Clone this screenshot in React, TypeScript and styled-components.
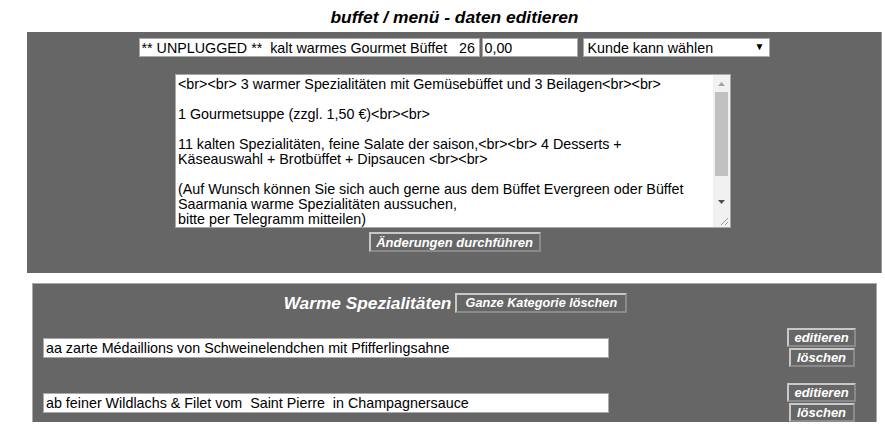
import React from "react";
import styled, { createGlobalStyle } from "styled-components";

const Global = createGlobalStyle`
  html, body { margin: 0; padding: 0; background: #fff; }
  body { font-family: "Liberation Sans", Arial, sans-serif; }
`;

const Page = styled.div`
  width: 885px;
  display: flex;
  flex-direction: column;
`;

const Title = styled.h1`
  margin: 0;
  height: 32px;
  padding: 3px 0 0 24px;
  box-sizing: border-box;
  display: flex;
  align-items: center;
  justify-content: center;
  font: italic bold 17.4px "Liberation Sans", Arial, sans-serif;
  color: #000;
`;

const EditPanel = styled.div`
  margin-left: 27px;
  width: 854px;
  background: #666;
  border-right: 1px solid #999;
  padding: 6px 0 21px;
  display: flex;
  flex-direction: column;
  align-items: center;
`;

const TopRow = styled.div`
  display: flex;
  align-items: center;
  height: 19px;
`;

const TextInput = styled.input<{ $w: number; $ml?: number }>`
  box-sizing: border-box;
  width: ${(p) => p.$w}px;
  height: 19px;
  margin-left: ${(p) => p.$ml ?? 0}px;
  padding: 0 2px;
  border: 1px solid #a9a9a9;
  background: #fff;
  font: 14.3px "Liberation Sans", Arial, sans-serif;
  color: #000;
  outline: none;
`;

const SelectWrap = styled.div`
  position: relative;
  margin-left: 5px;
  width: 187px;
  height: 19px;
`;

const Select = styled.select`
  appearance: none;
  box-sizing: border-box;
  width: 100%;
  height: 19px;
  padding: 0 4px;
  border: 1px solid #a9a9a9;
  border-radius: 0;
  background: #fff;
  font: 14.3px "Liberation Sans", Arial, sans-serif;
  color: #000;
  outline: none;
`;

const Arrow = styled.span`
  position: absolute;
  right: 5px;
  top: 3px;
  font-size: 10px;
  line-height: 12px;
  color: #000;
  pointer-events: none;
`;

const AreaWrap = styled.div`
  position: relative;
  margin-top: 17px;
  margin-left: -2px;
  width: 556px;
  height: 154px;
`;

const Description = styled.textarea`
  display: block;
  box-sizing: border-box;
  width: 100%;
  height: 100%;
  padding: 2px 30px 2px 2px;
  border: 1px solid #a9a9a9;
  background: #fff;
  font: 14.3px/15px "Liberation Sans", Arial, sans-serif;
  color: #000;
  resize: none;
  overflow: hidden;
  outline: none;
`;

const ScrollBar = styled.div`
  position: absolute;
  top: 1px;
  right: 1px;
  bottom: 1px;
  width: 17px;
  background: #f1f1f1;
  display: flex;
  flex-direction: column;
  pointer-events: none;
`;

const ScrollButton = styled.div`
  height: 17px;
  flex: none;
  display: flex;
  align-items: center;
  justify-content: center;
`;

const Track = styled.div`
  flex: 1;
  padding: 0 2px;
`;

const Thumb = styled.div`
  height: 84px;
  background: #c1c1c1;
`;

const GrayButton = styled.button<{ $size?: number }>`
  box-sizing: border-box;
  background: #666;
  color: #fff;
  border: 2px solid;
  border-color: #c8c8c8 #8a8a8a #8a8a8a #c8c8c8;
  font: italic bold ${(p) => p.$size ?? 13}px "Liberation Sans", Arial, sans-serif;
  padding: 0 5px;
  height: 20px;
  cursor: pointer;
  white-space: nowrap;
`;

const SubmitButton = styled(GrayButton)`
  margin-top: 4px;
  width: 172px;
  margin-left: 1px;
`;

const CategoryPanel = styled.div`
  margin-top: 10px;
  margin-left: 32px;
  width: 845px;
  box-sizing: border-box;
  background: #666;
  border: 1px solid #aaa;
  border-bottom: none;
  padding: 9px 0 0;
  display: flex;
  flex-direction: column;
`;

const CategoryHead = styled.div`
  display: flex;
  align-items: center;
  justify-content: center;
  gap: 4px;
  padding-left: 2px;
  height: 20px;
`;

const CategoryTitle = styled.span`
  font: italic bold 17.3px "Liberation Sans", Arial, sans-serif;
  color: #fff;
`;

const KategorieButton = styled(GrayButton)`
  width: 172px;
`;

const ItemList = styled.div`
  display: flex;
  flex-direction: column;
  gap: 16px;
  margin-top: 15px;
  padding: 0 20px 0 10px;
`;

const ItemRow = styled.div`
  display: flex;
  align-items: center;
  justify-content: space-between;
  height: 39px;
`;

const ItemInput = styled(TextInput)`
  height: 20px;
`;

const ButtonStack = styled.div`
  display: flex;
  flex-direction: column;
  align-items: center;
  width: 69px;
`;

const SmallButton = styled(GrayButton)<{ $w: number }>`
  width: ${(p) => p.$w}px;
  height: 19px;
  padding: 0;
  margin-top: ${(p) => (p.$w < 69 ? 1 : 0)}px;
`;

const description = `<br><br> 3 warmer Spezialitäten mit Gemüsebüffet und 3 Beilagen<br><br>

1 Gourmetsuppe (zzgl. 1,50 €)<br><br>

11 kalten Spezialitäten, feine Salate der saison,<br><br> 4 Desserts + Käseauswahl + Brotbüffet + Dipsaucen <br><br>

(Auf Wunsch können Sie sich auch gerne aus dem Büffet Evergreen oder Büffet Saarmania warme Spezialitäten aussuchen,
bitte per Telegramm mitteilen)
<br><br>`;

const items = [
  "aa zarte Médaillions von Schweinelendchen mit Pfifferlingsahne",
  "ab feiner Wildlachs & Filet vom  Saint Pierre  in Champagnersauce",
];

export default function App() {
  return (
    <Page>
      <Global />
      <Title>buffet / menü - daten editieren</Title>
      <EditPanel>
        <TopRow>
          <TextInput $w={341} defaultValue="** UNPLUGGED **  kalt warmes Gourmet Büffet   26" />
          <TextInput $w={96} $ml={2} defaultValue="0,00" />
          <SelectWrap>
            <Select defaultValue="k">
              <option value="k">Kunde kann wählen</option>
            </Select>
            <Arrow>▼</Arrow>
          </SelectWrap>
        </TopRow>
        <AreaWrap>
          <Description defaultValue={description} />
          <ScrollBar>
            <ScrollButton>
              <svg width="7" height="4" viewBox="0 0 7 4">
                <path d="M0 4 L3.5 0 L7 4 Z" fill="#a3a3a3" />
              </svg>
            </ScrollButton>
            <Track>
              <Thumb />
            </Track>
            <ScrollButton>
              <svg width="7" height="4" viewBox="0 0 7 4">
                <path d="M0 0 L3.5 4 L7 0 Z" fill="#505050" />
              </svg>
            </ScrollButton>
            <ScrollButton>
              <svg width="17" height="17" viewBox="0 0 17 17">
                <path d="M15 8 L8 15 M15 12 L12 15" stroke="#9a9a9a" strokeWidth="1" />
              </svg>
            </ScrollButton>
          </ScrollBar>
        </AreaWrap>
        <SubmitButton>Änderungen durchführen</SubmitButton>
      </EditPanel>
      <CategoryPanel>
        <CategoryHead>
          <CategoryTitle>Warme Spezialitäten</CategoryTitle>
          <KategorieButton $size={12.7}>Ganze Kategorie löschen</KategorieButton>
        </CategoryHead>
        <ItemList>
          {items.map((t) => (
            <ItemRow key={t}>
              <ItemInput $w={566} defaultValue={t} />
              <ButtonStack>
                <SmallButton $w={69}>editieren</SmallButton>
                <SmallButton $w={66}>löschen</SmallButton>
              </ButtonStack>
            </ItemRow>
          ))}
        </ItemList>
      </CategoryPanel>
    </Page>
  );
}
